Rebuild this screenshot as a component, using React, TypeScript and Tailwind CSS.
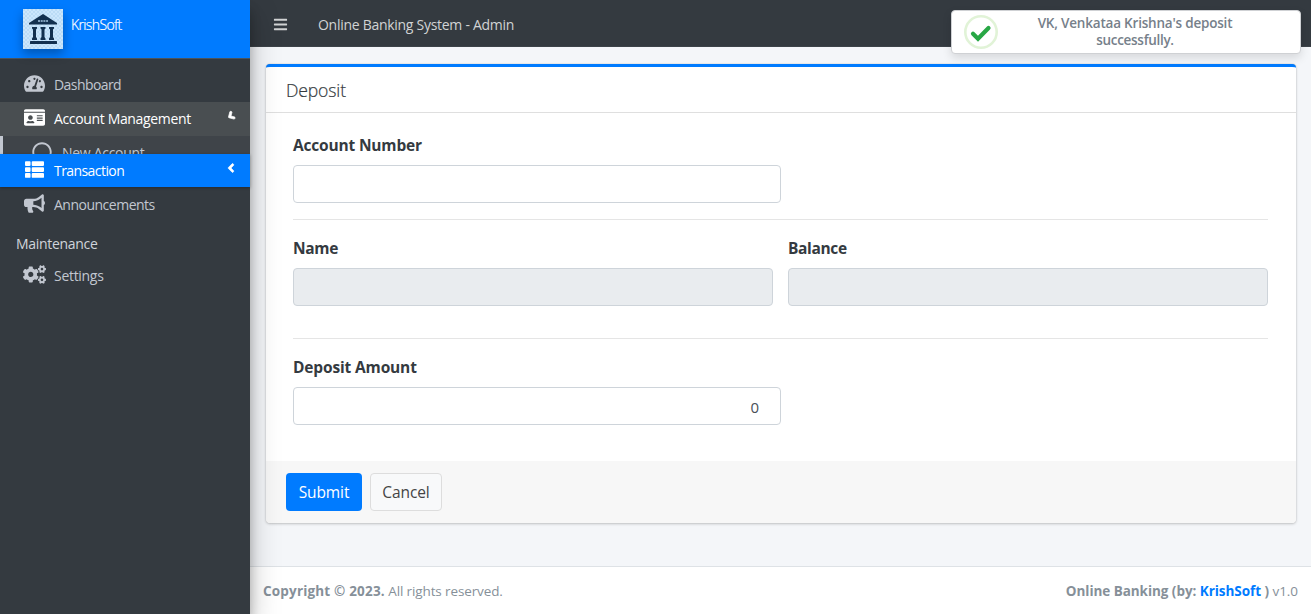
import React from 'react';
import {
  FaTachometerAlt,
  FaIdCard,
  FaThList,
  FaBullhorn,
  FaCogs,
  FaBars,
  FaAngleLeft,
  FaRegCircle,
} from 'react-icons/fa';

function BankLogo() {
  return (
    <svg viewBox="0 0 40 40" className="h-10 w-10 shadow-[0_5px_10px_rgba(0,0,0,0.3)]">
      <defs>
        <pattern id="checks" width="4" height="4" patternUnits="userSpaceOnUse">
          <rect width="4" height="4" fill="#cbe6fc" />
          <rect width="2" height="2" fill="#bbdcf6" />
          <rect x="2" y="2" width="2" height="2" fill="#bbdcf6" />
        </pattern>
      </defs>
      <rect width="40" height="40" fill="url(#checks)" />
      <g fill="#12304f">
        <path d="M20 5 L34 14 V15.500 H6 V14 Z" />
        <path d="M9 18h5v1.500l-1 1V28l1 1.500V31H9v-1.500L10 28v-7.500l-1-1z" />
        <path d="M17.500 18h5v1.500l-1 1V28l1 1.500V31h-5v-1.500l1-1.500v-7.500l-1-1z" />
        <path d="M26 18h5v1.500l-1 1V28l1 1.500V31h-5v-1.500l1-1.500v-7.500l-1-1z" />
        <rect x="7" y="32" width="27" height="3" rx="0.500" />
      </g>
      <path d="M15 12h10" stroke="#7f9fbb" strokeWidth="1.800" strokeDasharray="2 0.700" />
    </svg>
  );
}

function SuccessIcon() {
  return (
    <svg viewBox="0 0 34 34" className="h-[34px] w-[34px] shrink-0">
      <circle cx="17" cy="17" r="15.700" fill="none" stroke="#e1f3d7" strokeWidth="2.600" />
      <path d="M9 18.700l5 5L24.500 13" fill="none" stroke="#28a745" strokeWidth="4.200" strokeLinecap="round" />
    </svg>
  );
}

type NavItemProps = {
  icon: React.ReactNode;
  label: string;
  className: string;
  textClass: string;
  arrow?: React.ReactNode;
};

function NavItem({ icon, label, className, textClass, arrow }: NavItemProps) {
  return (
    <a className={`flex shrink-0 items-center pl-[22px] pr-3 ${className}`}>
      <span className="mr-[7px] flex w-[25px] shrink-0 justify-center pb-[3px]">{icon}</span>
      <span className={`whitespace-nowrap ${textClass}`}>{label}</span>
      {arrow && <span className="ml-auto pb-[6px]">{arrow}</span>}
    </a>
  );
}

function Sidebar() {
  return (
    <aside className="z-10 flex w-[250px] shrink-0 flex-col bg-[#343a40] text-[14px] text-[#c2c7d0] shadow-[0_14px_28px_rgba(0,0,0,0.25),0_10px_10px_rgba(0,0,0,0.22)]">
      <div className="flex h-[59px] shrink-0 items-start border-b border-[#4b545c] bg-[#007bff] pl-[23px] pt-[9px]">
        <BankLogo />
        <span className="ml-2 mt-[6px] leading-5 font-light tracking-[-0.630px] text-white [-webkit-text-stroke:0.2px_white]">KrishSoft</span>
      </div>
      <nav className="flex flex-col pt-[9px]">
        <NavItem className="h-[34px]" icon={<FaTachometerAlt size={21} />} label="Dashboard" textClass="tracking-[-0.570px] pb-0.5" />
        <NavItem
          className="h-[34px] bg-[#494e51] text-white"
          icon={<FaIdCard size={21} />}
          label="Account Management"
          textClass="tracking-[-0.350px] pb-0.5"
          arrow={<FaAngleLeft size={14} strokeWidth={24} stroke="currentColor" className="-rotate-[30deg]" />}
        />
        <div className="flex h-[18px] items-start overflow-hidden border-l-3 border-[#c2c7d0] bg-[#3f4449] pl-[29px]">
          <FaRegCircle size={20} className="mt-[6px] shrink-0" />
          <span className="ml-[10px] mt-[7px] whitespace-nowrap leading-5 tracking-[-0.300px]">New Account</span>
        </div>
        <NavItem
          className="h-[33px] bg-[#007bff] text-white shadow-[0_1px_3px_rgba(0,0,0,0.3)]"
          icon={<FaThList size={19} />}
          label="Transaction"
          textClass="tracking-[-0.570px]"
          arrow={<FaAngleLeft size={14} strokeWidth={24} stroke="currentColor" />}
        />
        <NavItem className="mt-px h-[34px]" icon={<FaBullhorn size={21} />} label="Announcements" textClass="tracking-[-0.500px] pb-0.5" />
        <div className="flex h-[37px] items-center pl-4 pt-1.5 text-[#d0d4db]">
          <span className="tracking-[-0.300px]">Maintenance</span>
        </div>
        <NavItem className="h-[34px]" icon={<FaCogs size={23} />} label="Settings" textClass="tracking-[-0.300px] pb-0.5" />
      </nav>
    </aside>
  );
}

type FieldProps = {
  label: string;
  labelClass: string;
  className?: string;
  disabled?: boolean;
  value?: string;
};

function Field({ label, labelClass, className = '', disabled, value }: FieldProps) {
  return (
    <div className={className}>
      <label className={`block h-6 whitespace-nowrap text-[15.500px] leading-[25px] font-bold ${labelClass}`}>{label}</label>
      <div
        className={`mt-2 flex h-[38px] items-center justify-end rounded border border-[#ced4da] pt-0.5 pr-[21px] text-[15px] text-[#495057] ${disabled ? 'bg-[#e9ecef]' : 'bg-white'}`}
      >
        {value}
      </div>
    </div>
  );
}

function DepositCard() {
  return (
    <section className="mr-[15px] ml-4 mt-[17px] flex h-[459px] flex-col overflow-hidden rounded border-t-3 border-[#007bff] bg-white shadow-[0_0_1px_rgba(0,0,0,0.3),0_1px_3px_rgba(0,0,0,0.2)]">
      <header className="flex h-[46px] items-center border-b border-[#dfdfdf] pl-5 pt-0.5">
        <h3 className="text-[17.600px] font-light tracking-[-0.150px] [-webkit-text-stroke:0.2px_#343a40]">Deposit</h3>
      </header>
      <div className="flex flex-1 flex-col pr-7 pl-[27px] pt-[20px]">
        <Field label="Account Number" className="w-[488px]" labelClass="tracking-[-0.180px]" />
        <hr className="mt-4 border-[#e5e5e5]" />
        <div className="mt-4 grid grid-cols-2 gap-[15px]">
          <Field label="Name" disabled labelClass="tracking-[-0.350px]" />
          <Field label="Balance" disabled labelClass="tracking-[-0.350px]" />
        </div>
        <hr className="mt-8 border-[#e5e5e5]" />
        <Field label="Deposit Amount" value="0" className="mt-4 w-[488px]" labelClass="tracking-[-0.150px]" />
      </div>
      <footer className="flex h-[62px] shrink-0 gap-2 bg-[#f7f7f7] pl-5 pt-3">
        <button className="h-[38px] w-[76px] rounded bg-[#007bff] pt-px text-[15.500px] tracking-[-0.100px] text-white">Submit</button>
        <button className="h-[38px] w-[72px] rounded border border-[#dddddd] bg-[#f8f9fa] pt-px text-[15.500px] tracking-[-0.100px] text-[#444444]">Cancel</button>
      </footer>
    </section>
  );
}

function Toast() {
  return (
    <div className="absolute left-[951px] top-[10px] z-20 flex h-[44px] w-[350px] items-center rounded-[4px] border border-[#cfd1d4] bg-white pl-3 shadow-[0_4px_10px_rgba(0,0,0,0.12)]">
      <SuccessIcon />
      <p className="ml-[14px] w-[246px] text-center text-[13.500px] leading-[17px] font-semibold text-[#76808a]">
        <span className="whitespace-nowrap tracking-[-0.200px]">VK, Venkataa Krishna's deposit</span>
        <br />
        <span className="tracking-[-0.300px]">successfully.</span>
      </p>
    </div>
  );
}

export default function App() {
  return (
    <div className="relative flex h-[614px] w-[1311px] overflow-hidden bg-[#f4f6f9] font-['Open_Sans','Noto_Sans',sans-serif] text-[16px] text-[#343a40]">
      <Sidebar />
      <main className="flex min-w-0 flex-1 flex-col">
        <div className="flex h-[47px] shrink-0 items-center bg-[#343a40] pl-[23px] text-[14px] text-[#d1d3d4] shadow-[inset_0_-1px_0_#3d4349]">
          <FaBars size={15} className="mt-0.5" />
          <span className="ml-[30px] pt-0.5 whitespace-nowrap tracking-[-0.280px]">Online Banking System - Admin</span>
        </div>
        <DepositCard />
        <footer className="mt-auto flex h-[48px] items-center justify-between border-t border-[#dee2e6] bg-white px-[13px] pt-0.5 text-[13.500px] text-[#869099]">
          <span className="whitespace-nowrap tracking-[-0.120px]">
            <strong className="font-bold tracking-[0.180px]">Copyright © 2023.</strong> All rights reserved.
          </span>
          <span className="whitespace-nowrap tracking-[-0.050px]">
            <b className="font-bold">
              Online Banking (by: <a className="text-[#007bff]">KrishSoft</a> )
            </b>{' '}
            v1.0
          </span>
        </footer>
      </main>
      <Toast />
    </div>
  );
}
